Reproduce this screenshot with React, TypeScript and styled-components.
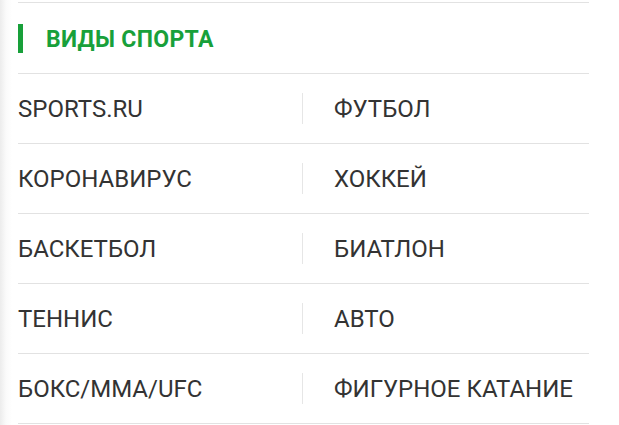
import styled, { createGlobalStyle } from "styled-components";

const GlobalStyle = createGlobalStyle`
  html, body {
    margin: 0;
    padding: 0;
    background: linear-gradient(to right, #ececec 0px, #fafafa 6px, #ffffff 12px);
    font-family: Roboto, "Noto Sans", sans-serif;
  }
`;

const Section = styled.section`
  width: 571px;
  margin-left: 18px;
  padding-top: 2px;
`;

const Header = styled.div`
  display: flex;
  align-items: center;
  height: 70px;
  border-top: 1px solid #e2e2e2;
  border-bottom: 1px solid #e2e2e2;
`;

const Bar = styled.span`
  width: 5px;
  height: 29px;
  margin-right: 23px;
  background-color: #18a03a;
`;

const Title = styled.h2`
  margin: 2px 0 0;
  font-size: 23px;
  font-weight: 700;
  color: #18a03a;
  letter-spacing: 0.3px;
`;

const Row = styled.div`
  display: grid;
  grid-template-columns: 284px 1fr;
  align-items: center;
  height: 69px;
  border-bottom: 1px solid #e2e2e2;
`;

const Cell = styled.a<{ right?: boolean }>`
  display: flex;
  align-items: center;
  height: 30px;
  padding-top: 1px;
  font-size: 24px;
  color: #333333;
  text-decoration: none;
  ${(props) =>
    props.right &&
    `
    padding-left: 31px;
    border-left: 1px solid #e6e6e6;
  `}
`;

const sports: [string, string][] = [
  ["SPORTS.RU", "ФУТБОЛ"],
  ["КОРОНАВИРУС", "ХОККЕЙ"],
  ["БАСКЕТБОЛ", "БИАТЛОН"],
  ["ТЕННИС", "АВТО"],
  ["БОКС/MMA/UFC", "ФИГУРНОЕ КАТАНИЕ"],
];

const App: React.FC = () => {
  return (
    <>
      <GlobalStyle />
      <Section>
        <Header>
          <Bar />
          <Title>ВИДЫ СПОРТА</Title>
        </Header>
        {sports.map(([left, right]) => (
          <Row key={left}>
            <Cell>{left}</Cell>
            <Cell right>{right}</Cell>
          </Row>
        ))}
      </Section>
    </>
  );
};

export default App;
